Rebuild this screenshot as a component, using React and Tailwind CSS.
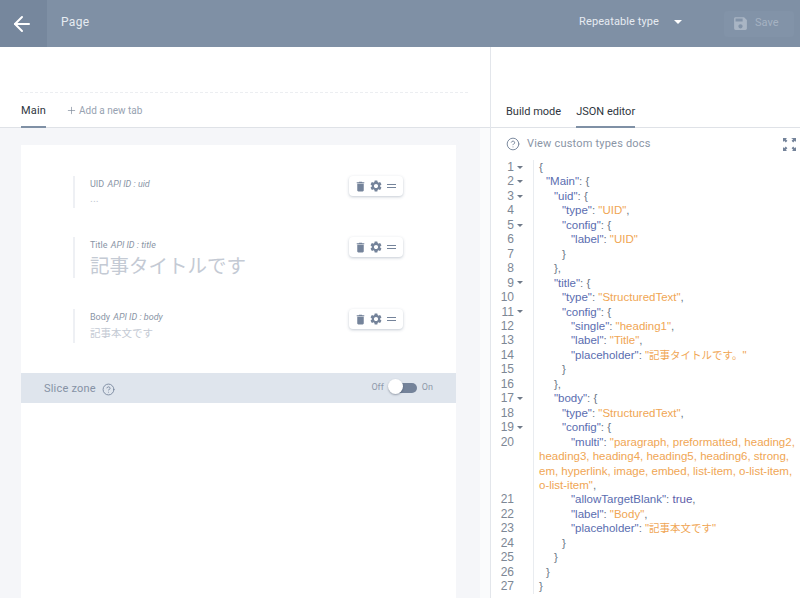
import React from 'react';
import { ArrowLeft, Plus, CircleHelp } from 'lucide-react';
import { MdDelete, MdSettings, MdSave } from 'react-icons/md';

const KEY = 'text-[#5a6db0]';
const STR = 'text-[#f0a654]';
const PUNC = 'text-[#6b7787]';
const CJK = 'text-[#f0a654] text-[10.5px]';

const k = t => ({ t, c: KEY });
const s = t => ({ t, c: STR });
const p = t => ({ t, c: PUNC });

// each line: [number, foldable, indent, parts]
const lines = [
  [1, true, 0, [p('{')]],
  [2, true, 1, [k('"Main"'), p(': {')]],
  [3, true, 2, [k('"uid"'), p(': {')]],
  [4, false, 3, [k('"type"'), p(': '), s('"UID"'), p(',')]],
  [5, true, 3, [k('"config"'), p(': {')]],
  [6, false, 4, [k('"label"'), p(': '), s('"UID"')]],
  [7, false, 3, [p('}')]],
  [8, false, 2, [p('},')]],
  [9, true, 2, [k('"title"'), p(': {')]],
  [10, false, 3, [k('"type"'), p(': '), s('"StructuredText"'), p(',')]],
  [11, true, 3, [k('"config"'), p(': {')]],
  [12, false, 4, [k('"single"'), p(': '), s('"heading1"'), p(',')]],
  [13, false, 4, [k('"label"'), p(': '), s('"Title"'), p(',')]],
  [14, false, 4, [k('"placeholder"'), p(': '), s('"'), { t: '記事タイトルです。', c: CJK }, s('"')]],
  [15, false, 3, [p('}')]],
  [16, false, 2, [p('},')]],
  [17, true, 2, [k('"body"'), p(': {')]],
  [18, false, 3, [k('"type"'), p(': '), s('"StructuredText"'), p(',')]],
  [19, true, 3, [k('"config"'), p(': {')]],
  [20, false, 4, [k('"multi"'), p(': '), s('"paragraph, preformatted, heading2,')]],
  ['', false, 0, [s('heading3, heading4, heading5, heading6, strong,')]],
  ['', false, 0, [s('em, hyperlink, image, embed, list-item, o-list-item,')]],
  ['', false, 0, [s('o-list-item"'), p(',')]],
  [21, false, 4, [k('"allowTargetBlank"'), p(': '), { t: 'true', c: 'text-[#5d5aa8]' }, p(',')]],
  [22, false, 4, [k('"label"'), p(': '), s('"Body"'), p(',')]],
  [23, false, 4, [k('"placeholder"'), p(': '), s('"'), { t: '記事本文です', c: CJK }, s('"')]],
  [24, false, 3, [p('}')]],
  [25, false, 2, [p('}')]],
  [26, false, 1, [p('}')]],
  [27, false, 0, [p('}')]],
];

const indents = ['pl-[5px]', 'pl-[12px]', 'pl-[20px]', 'pl-[28px]', 'pl-[37px]'];

function Actions() {
  return (
    <div className="flex h-[20px] w-[54px] items-center justify-center gap-[2px] rounded-sm bg-white text-[#74839a] shadow-[0_1px_3px_rgba(60,80,110,0.3)]">
      <MdDelete size={13} />
      <MdSettings size={14} />
      <svg width="14" height="14" viewBox="0 0 14 14" fill="currentColor">
        <rect x="2" y="5" width="9" height="1" />
        <rect x="2" y="8" width="9" height="1" />
      </svg>
    </div>
  );
}

function Field({ label, api, ph, phClass, height, gap }) {
  return (
    <div className={`flex justify-between pl-[52px] pr-[53px] ${gap}`}>
      <div className={`flex flex-col border-l-2 border-[#eef0f4] pl-[15px] pt-[2px] ${height}`}>
        <div className="text-[9px] leading-[12px] text-[#8a95a6]">
          {label} <i className="ml-[1px]">API ID : {api}</i>
        </div>
        <div className={phClass}>{ph}</div>
      </div>
      <Actions />
    </div>
  );
}

export default function App() {
  return (
    <div className="flex h-[598px] w-[800px] flex-col overflow-hidden bg-white font-['Roboto','Noto_Sans_CJK_JP',sans-serif]">
      <header className="flex h-[47px] shrink-0 items-center bg-[#7f90a5] text-white">
        <div className="flex h-full w-[47px] items-center justify-center bg-[#76879d] pr-[3px]">
          <ArrowLeft size={24} strokeWidth={2} />
        </div>
        <div className="ml-[14px] flex-1 pb-[3px] text-[12px] tracking-[0.3px] text-[#e6ebf1]">Page</div>
        <div className="flex items-center pb-[3px] text-[11px] tracking-[0.1px] text-[#e6ebf1]">
          Repeatable type
          <span className="ml-[15px] h-0 w-0 border-x-[4px] border-t-[4px] border-x-transparent border-t-white" />
        </div>
        <div className="ml-[42px] mr-[6px] flex h-[26px] w-[70px] items-center gap-[6px] rounded-sm bg-[#8293a8] pl-[8px] text-[11px] text-[#a5b2c2]">
          <MdSave size={17} className="text-[#a9b5c4]" />
          Save
        </div>
      </header>

      <div className="flex flex-1 min-h-0">
        <div className="flex w-[491px] shrink-0 flex-col border-r border-[#e3e6eb]">
          <div className="ml-[20px] h-[46px] w-[448px] shrink-0 border-b border-dashed border-[#eceef1]" />
          <div className="flex h-[35px] shrink-0 items-end border-b border-[#dfe2e7] pl-[21px]">
            <div className="-mb-px flex h-full w-[25px] items-center justify-center border-b-2 border-[#7f90a5] pt-[2px] text-[11px] tracking-[0.2px] text-[#2f3640]">
              Main
            </div>
            <div className="ml-[20px] flex h-full items-center gap-[2px] pt-[1px] text-[10px] text-[#97a2b1]">
              <Plus size={11} strokeWidth={1.5} className="text-[#7f8b9b]" />
              Add a new tab
            </div>
          </div>
          <div className="flex flex-1 min-h-0 bg-[#f5f6f9]">
            <div className="flex-1 min-w-0 pl-[21px] pr-[24px] pt-[17px]">
              <div className="flex h-full flex-col bg-white pt-[31px]">
                <Field label="UID" api="uid" ph="..." phClass="mt-[2px] text-[11px] leading-[14px] text-[#c4cad4]" height="h-[32px]" gap="mb-[29px]" />
                <Field label="Title" api="title" ph="記事タイトルです" phClass="mt-[2px] text-[19.5px] leading-[27px] text-[#c4cad4]" height="h-[41px]" gap="mb-[31px]" />
                <Field label="Body" api="body" ph="記事本文です" phClass="mt-[4px] text-[10.5px] leading-[14px] text-[#c4cad4]" height="h-[34px]" gap="mb-[30px]" />
                <div className="flex h-[30px] items-center bg-[#dfe5ed] pl-[23px] pr-[23px]">
                  <span className="pt-[2px] text-[11px] tracking-[0.2px] text-[#8692a5]">Slice zone</span>
                  <CircleHelp size={13} strokeWidth={1.6} className="ml-[6px] mt-[2px] text-[#74839a]" />
                  <span className="ml-auto text-[9px] text-[#8f9aab]">Off</span>
                  <div className="relative mx-[5px] h-[10px] w-[28px] rounded-full bg-[#74839a]">
                    <span className="absolute -left-[1px] -top-[4px] h-[15px] w-[15px] rounded-full bg-white shadow-[0_1px_2px_rgba(40,50,70,0.4)]" />
                  </div>
                  <span className="text-[9px] text-[#8f9aab]">On</span>
                </div>
              </div>
            </div>
            <div className="w-[10px] shrink-0 bg-[#fafbfc]" />
          </div>
        </div>

        <div className="flex min-w-0 flex-1 flex-col">
          <div className="h-[46px] shrink-0" />
          <div className="flex h-[35px] shrink-0 items-end gap-[15px] border-b border-[#dfe2e7] pl-[15px] text-[11px] text-[#2f3640]">
            <div className="flex h-full items-center pt-[5px]">Build mode</div>
            <div className="-mb-px flex h-full items-center border-b-2 border-[#7f90a5] pt-[4px]">JSON editor</div>
          </div>
          <div className="flex h-[32px] shrink-0 items-center pl-[15px] pr-[3px] text-[11px] tracking-[0.2px] text-[#8a95a6]">
            <CircleHelp size={14} strokeWidth={1.6} className="mr-[7px] text-[#74839a]" />
            View custom types docs
            <svg width="15" height="15" viewBox="0 0 15 15" className="ml-auto text-[#74839a]" fill="currentColor">
              <path d="M1 1h4L3.8 2.2 5.4 3.8 3.8 5.4 2.2 3.8 1 5zM14 1v4l-1.2-1.2-1.6 1.6-1.6-1.6 1.6-1.6L9 1zM1 14v-4l1.2 1.2 1.6-1.6 1.6 1.6-1.6 1.6L5 14zM14 14H10l1.2-1.2-1.6-1.6 1.6-1.6 1.6 1.6L14 10z" />
            </svg>
          </div>
          <div className="flex-1 min-h-0 font-['Liberation_Sans','Noto_Sans_CJK_JP',sans-serif] text-[11.5px] leading-[14.45px]">
            {lines.map(([n, fold, ind, parts], i) => (
              <div key={i} className="flex">
                <div className="flex w-[43px] shrink-0 items-center border-r border-[#e9ecf0] text-[12px] text-[#7d8795]">
                  <span className="w-[23px] shrink-0 text-right">{n}</span>
                  {fold && <span className="ml-[3px] h-0 w-0 border-x-[3px] border-t-[3px] border-x-transparent border-t-[#6f7a89]" />}
                </div>
                <div className={`whitespace-nowrap ${indents[ind]}`}>
                  {parts.map((part, j) => (
                    <span key={j} className={part.c}>{part.t}</span>
                  ))}
                </div>
              </div>
            ))}
          </div>
        </div>
      </div>
    </div>
  );
}
